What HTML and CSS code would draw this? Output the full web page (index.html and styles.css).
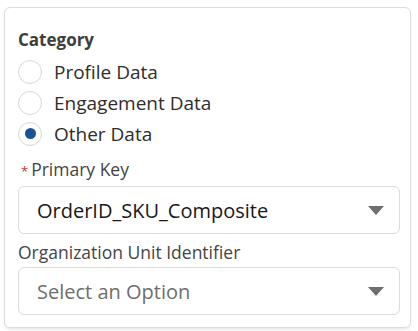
FILE: index.html
```html
<!DOCTYPE html>
<html lang="en">
<head>
    <meta charset="UTF-8">
    <meta name="viewport" content="width=device-width, initial-scale=1.0">
    <title>Data Category</title>
    <link rel="stylesheet" href="styles.css">
</head>
<body>
    <section class="card">
        <!-- Category radio group -->
        <fieldset class="category">
            <legend class="category-title">Category</legend>
            <label class="radio">
                <input type="radio" name="category" value="profile">
                <span class="radio-mark"></span>
                <span class="radio-text">Profile Data</span>
            </label>
            <label class="radio">
                <input type="radio" name="category" value="engagement">
                <span class="radio-mark"></span>
                <span class="radio-text">Engagement Data</span>
            </label>
            <label class="radio">
                <input type="radio" name="category" value="other" checked>
                <span class="radio-mark"></span>
                <span class="radio-text">Other Data</span>
            </label>
        </fieldset>

        <!-- Primary key -->
        <div class="field">
            <label class="field-label" for="primaryKey"><abbr class="required" title="required">*</abbr>Primary Key</label>
            <button type="button" class="picklist" id="primaryKey">
                <span class="picklist-value">OrderID_SKU_Composite</span>
                <span class="picklist-arrow"></span>
            </button>
        </div>

        <!-- Organization unit -->
        <div class="field">
            <label class="field-label" for="orgUnit">Organization Unit Identifier</label>
            <button type="button" class="picklist" id="orgUnit">
                <span class="picklist-value placeholder">Select an Option</span>
                <span class="picklist-arrow"></span>
            </button>
        </div>
    </section>
</body>
</html>
```

FILE: styles.css
```css
body {
    margin: 0;
    padding: 7px 7px 3px 4px;
    background: #fff;
    font-family: "Open Sans", sans-serif;
    color: #181818;
}

.card {
    box-sizing: border-box;
    height: 321px;
    border: 1px solid #dcdcdc;
    border-radius: 6px;
    box-shadow: 0 2px 2px rgba(0, 0, 0, 0.08);
    padding: 22px 10px 0 13px;
}

.category {
    border: none;
    margin: 0;
    padding: 0;
}

.category-title {
    padding: 0;
    font-size: 17px;
    font-weight: 700;
    line-height: 20px;
    color: #3e3e3c;
    margin-bottom: 6px;
}

.radio {
    display: flex;
    align-items: center;
    gap: 12px;
    height: 31px;
    cursor: pointer;
}

.radio input {
    display: none;
}

.radio-mark {
    box-sizing: border-box;
    width: 24px;
    height: 24px;
    border: 1px solid #d8d8d8;
    border-radius: 50%;
    display: flex;
    align-items: center;
    justify-content: center;
    background: #fff;
}

.radio input:checked + .radio-mark::after {
    content: "";
    width: 11px;
    height: 11px;
    border-radius: 50%;
    background: #1b5297;
}

.radio-text {
    font-size: 19px;
    color: #2f2d2b;
}

.field {
    margin-top: 8px;
}

.field:first-of-type {
    margin-top: 10px;
}

.field-label {
    display: block;
    font-size: 17.5px;
    line-height: 20px;
    color: #444;
    margin-bottom: 5px;
}

.required {
    color: #c23934;
    text-decoration: none;
    font-size: 13px;
    margin: 0 3px 0 3px;
}

.picklist {
    box-sizing: border-box;
    width: 100%;
    height: 48px;
    display: flex;
    align-items: center;
    justify-content: space-between;
    padding: 0 15px 0 18px;
    background: #fff;
    border: 1px solid #dddbda;
    border-radius: 6px;
    font-family: inherit;
    cursor: pointer;
}

.picklist-value {
    font-size: 20px;
    color: #181818;
}

.picklist-value.placeholder {
    color: #706e6b;
}

.picklist-arrow {
    width: 0;
    height: 0;
    border-left: 8px solid transparent;
    border-right: 8px solid transparent;
    border-top: 9px solid #706e6b;
}
```
